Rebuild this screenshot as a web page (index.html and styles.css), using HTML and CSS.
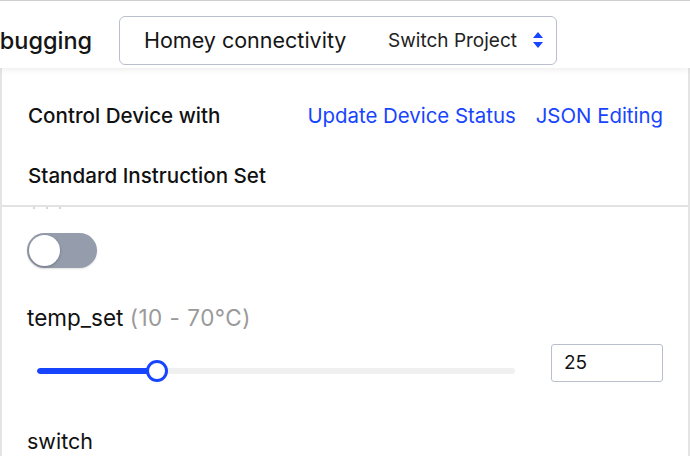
FILE: index.html
```html
<!DOCTYPE html>
<html>
<head>
<meta charset="utf-8">
<link rel="stylesheet" href="styles.css">
</head>
<body>
<header class="topbar">
  <h1 class="page-title">Debugging</h1>
  <div class="project-select">
    <span class="project-name">Homey connectivity</span>
    <span class="switch-label">Switch Project</span>
    <svg class="updown" width="12" height="18" viewBox="0 0 12 18"><path d="M6 1 L11 7 H1 Z" fill="#1744ff"/><path d="M6 17 L11 11 H1 Z" fill="#1744ff"/></svg>
  </div>
</header>
<main class="panel">
  <div class="panel-head">
    <div class="panel-title">Control Device with Standard Instruction Set</div>
    <nav class="panel-links">
      <a class="link">Update Device Status</a>
      <a class="link">JSON Editing</a>
    </nav>
  </div>
  <div class="panel-body">
    <div class="clipped-dots"><i></i><i></i><i></i></div>
    <div class="toggle"><span class="knob"></span></div>
    <div class="field-label temp-label">temp_set <span class="range">(10 - 70°C)</span></div>
    <div class="slider-row">
      <div class="slider">
        <div class="track"><div class="fill" style="width:25%"></div></div>
        <span class="thumb" style="left:25%"></span>
      </div>
      <div class="num-input">25</div>
    </div>
    <div class="field-label switch-label2">switch</div>
  </div>
</main>
</body>
</html>
```
FILE: styles.css
```css
* { box-sizing: border-box; }
html, body { margin: 0; padding: 0; }
body {
  width: 690px;
  height: 456px;
  overflow: hidden;
  font-family: Inter, "Noto Sans", sans-serif;
  color: #111;
  background: #fff;
}
.topbar {
  height: 68px;
  border-top: 1px solid #cfcfcf;
  display: flex;
  align-items: center;
  padding-top: 11px;
  background: #fff;
  position: relative;
  z-index: 2;
  box-shadow: 0 2px 6px rgba(0,0,0,0.07);
}
.page-title {
  margin: 0 0 0 -31px;
  font-size: 23.5px;
  font-weight: 500;
  width: 150px;
  flex: none;
  color: #151515;
}
.project-select {
  width: 438px;
  height: 49px;
  border: 1px solid #b9bfcb;
  border-radius: 6px;
  display: flex;
  align-items: center;
  padding: 0 12px 0 24px;
}
.project-name {
  font-size: 21.5px;
  flex: 1;
  color: #151515;
}
.switch-label {
  font-size: 19px;
  color: #222;
  margin-right: 15px;
}
.updown { display: block; }
.panel {
  height: 388px;
  border-left: 2px solid #e4e4e4;
  border-right: 2px solid #e4e4e4;
  width: 690px;
}
.panel-head {
  display: flex;
  justify-content: space-between;
  padding: 18px 25px 0 26px;
  border-bottom: 2px solid #e2e2e2;
  height: 139px;
}
.panel-title {
  width: 250px;
  font-size: 20.6px;
  font-weight: 500;
  line-height: 60px;
}
.panel-links {
  display: flex;
  gap: 20px;
  line-height: 60px;
  font-size: 20.4px;
}
.link { color: #1744ff; }
.panel-body {
  padding: 0 0 0 25px;
}
.clipped-dots {
  display: flex;
  gap: 11px;
  padding-left: 6px;
  height: 26px;
}
.clipped-dots i {
  width: 2px;
  height: 2px;
  background: #c8c8c8;
  border-radius: 1px;
}
.toggle {
  width: 70px;
  height: 35px;
  border-radius: 18px;
  background: #959cab;
  padding: 2px;
  box-shadow: 0 1px 2px rgba(0,0,0,0.12);
}
.knob {
  display: block;
  width: 31px;
  height: 31px;
  border-radius: 50%;
  background: #fff;
  box-shadow: 0 1px 3px rgba(0,0,0,0.25);
}
.field-label {
  font-size: 21.5px;
  margin-top: 36px;
  line-height: 28px;
}
.temp-label { font-size: 22.5px; }
.range { color: #9a9a9a; letter-spacing: 0.5px; }
.slider-row {
  display: flex;
  align-items: center;
  margin-top: 11px;
}
.slider {
  position: relative;
  width: 478px;
  height: 24px;
  margin-left: 10px;
  margin-top: 16px;
}
.track {
  position: absolute;
  left: 0; right: 0; top: 9px;
  height: 6px;
  border-radius: 3px;
  background: #f0f0f0;
  overflow: hidden;
}
.fill {
  height: 100%;
  background: #1744ff;
  border-radius: 3px;
}
.thumb {
  position: absolute;
  top: 1px;
  width: 22px;
  height: 22px;
  margin-left: -11px;
  border: 3px solid #1744ff;
  border-radius: 50%;
  background: #fff;
}
.num-input {
  width: 112px;
  height: 38px;
  margin-left: 36px;
  border: 1px solid #b9bfcb;
  border-radius: 3px;
  font-size: 19px;
  line-height: 36px;
  padding-left: 12px;
}
.switch-label2 {
  margin-top: 44px;
}
```
